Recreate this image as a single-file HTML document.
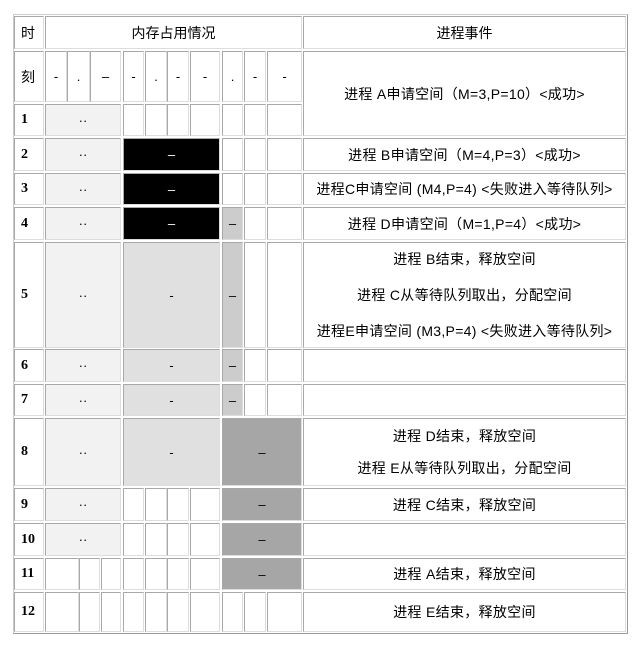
<!DOCTYPE html>
<html><head><meta charset="utf-8"><style>
body{margin:0;background:#fff;width:638px;height:646px;position:relative;overflow:hidden;font-family:"Liberation Sans","Noto Sans CJK SC",sans-serif;font-size:13px;color:#000}
.o{position:absolute;left:13px;top:14px;width:615px;height:620px;border:1px solid #ccc;border-right-color:#999;border-bottom-color:#999;box-sizing:border-box}
.c{position:absolute;box-sizing:border-box;border:1px solid #a8a8a8;border-right-color:#ddd;border-bottom-color:#ddd;display:flex;align-items:center;justify-content:center;text-align:center;line-height:1}
.n{justify-content:flex-start;padding-left:6px;font-family:"Liberation Serif",serif;font-weight:bold;font-size:14px}
.k{justify-content:flex-start;padding-left:6px;font-size:14px}
.e{flex-direction:column;font-size:14px;letter-spacing:0.3px}
.e div{margin:11px 0}
.e.f div{margin:9px 0}
</style></head><body>
<div class="o"></div>
<div id="g"></div>
<script>
var X={T:[14,43],c1:[45,66],c2:[67,89],c3:[90,120],c4:[123,143],c5:[145,166],c6:[167,188],c7:[190,219],c8:[222,242],c9:[244,265],c10:[267,301],E:[303,625],A:[45,120],B:[123,219],C:[222,301],d1:[45,78],d2:[79,99],d3:[101,120]};
var R=[[16,48],[51,101],[104,135],[138,170],[173,204],[207,239],[242,347],[349,381],[384,415],[418,485],[488,520],[523,555],[558,589],[592,631]];
var h='';
function c(k,r1,r2,bg,t,cls,col){var x=X[k];var y1=R[r1][0],y2=R[r2][1];
h+='<div class="c '+(cls||'')+'" style="left:'+x[0]+'px;top:'+y1+'px;width:'+(x[1]-x[0]+1)+'px;height:'+(y2-y1+1)+'px;background:'+(bg||'#fff')+';color:'+(col||'#000')+'">'+(t||'')+'</div>';}
c('T',0,0,'','时','k');c('T',1,1,'','刻','k');
h+='<div class="c" style="left:45px;top:16px;width:257px;height:33px;font-size:14px">内存占用情况</div>';
c('E',0,0,'','<span style="font-size:14px">进程事件</span>');
var hd=['-','.','–','-','.','-','-','.','-','-'];
for(var i=0;i<10;i++)c('c'+(i+1),1,1,'',hd[i]);
c('E',1,2,'','进程 A申请空间（M=3,P=10）&lt;成功&gt;','e');
var ev=['','','','进程 B申请空间（M=4,P=3）&lt;成功&gt;','进程C申请空间 (M4,P=4) &lt;失败进入等待队列&gt;','进程 D申请空间（M=1,P=4）&lt;成功&gt;','<div>进程 B结束，释放空间</div><div>进程 C从等待队列取出，分配空间</div><div>进程E申请空间 (M3,P=4) &lt;失败进入等待队列&gt;</div>','','','<div>进程 D结束，释放空间</div><div>进程 E从等待队列取出，分配空间</div>','进程 C结束，释放空间','','进程 A结束，释放空间','进程 E结束，释放空间'];
for(var r=2;r<14;r++){
c('T',r,r,'',''+(r-1),'n');
if(r<=11)c('A',r,r,'#f2f2f2','··');else{c('d1',r,r);c('d2',r,r);c('d3',r,r);}
if(r>=3&&r<=5)c('B',r,r,'#000','–','','#fff');
else if(r>=6&&r<=9)c('B',r,r,'#e0e0e0','-');
else{c('c4',r,r);c('c5',r,r);c('c6',r,r);c('c7',r,r);}
if(r>=9&&r<=12)c('C',r,r,'#a6a6a6','–');
else{ if(r>=5&&r<=8)c('c8',r,r,'#cccccc','–');else c('c8',r,r); c('c9',r,r);c('c10',r,r);}
if(r>=3)c('E',r,r,'',ev[r],r==9?'e f':'e');
}
document.getElementById('g').innerHTML=h;
</script>
</body></html>
